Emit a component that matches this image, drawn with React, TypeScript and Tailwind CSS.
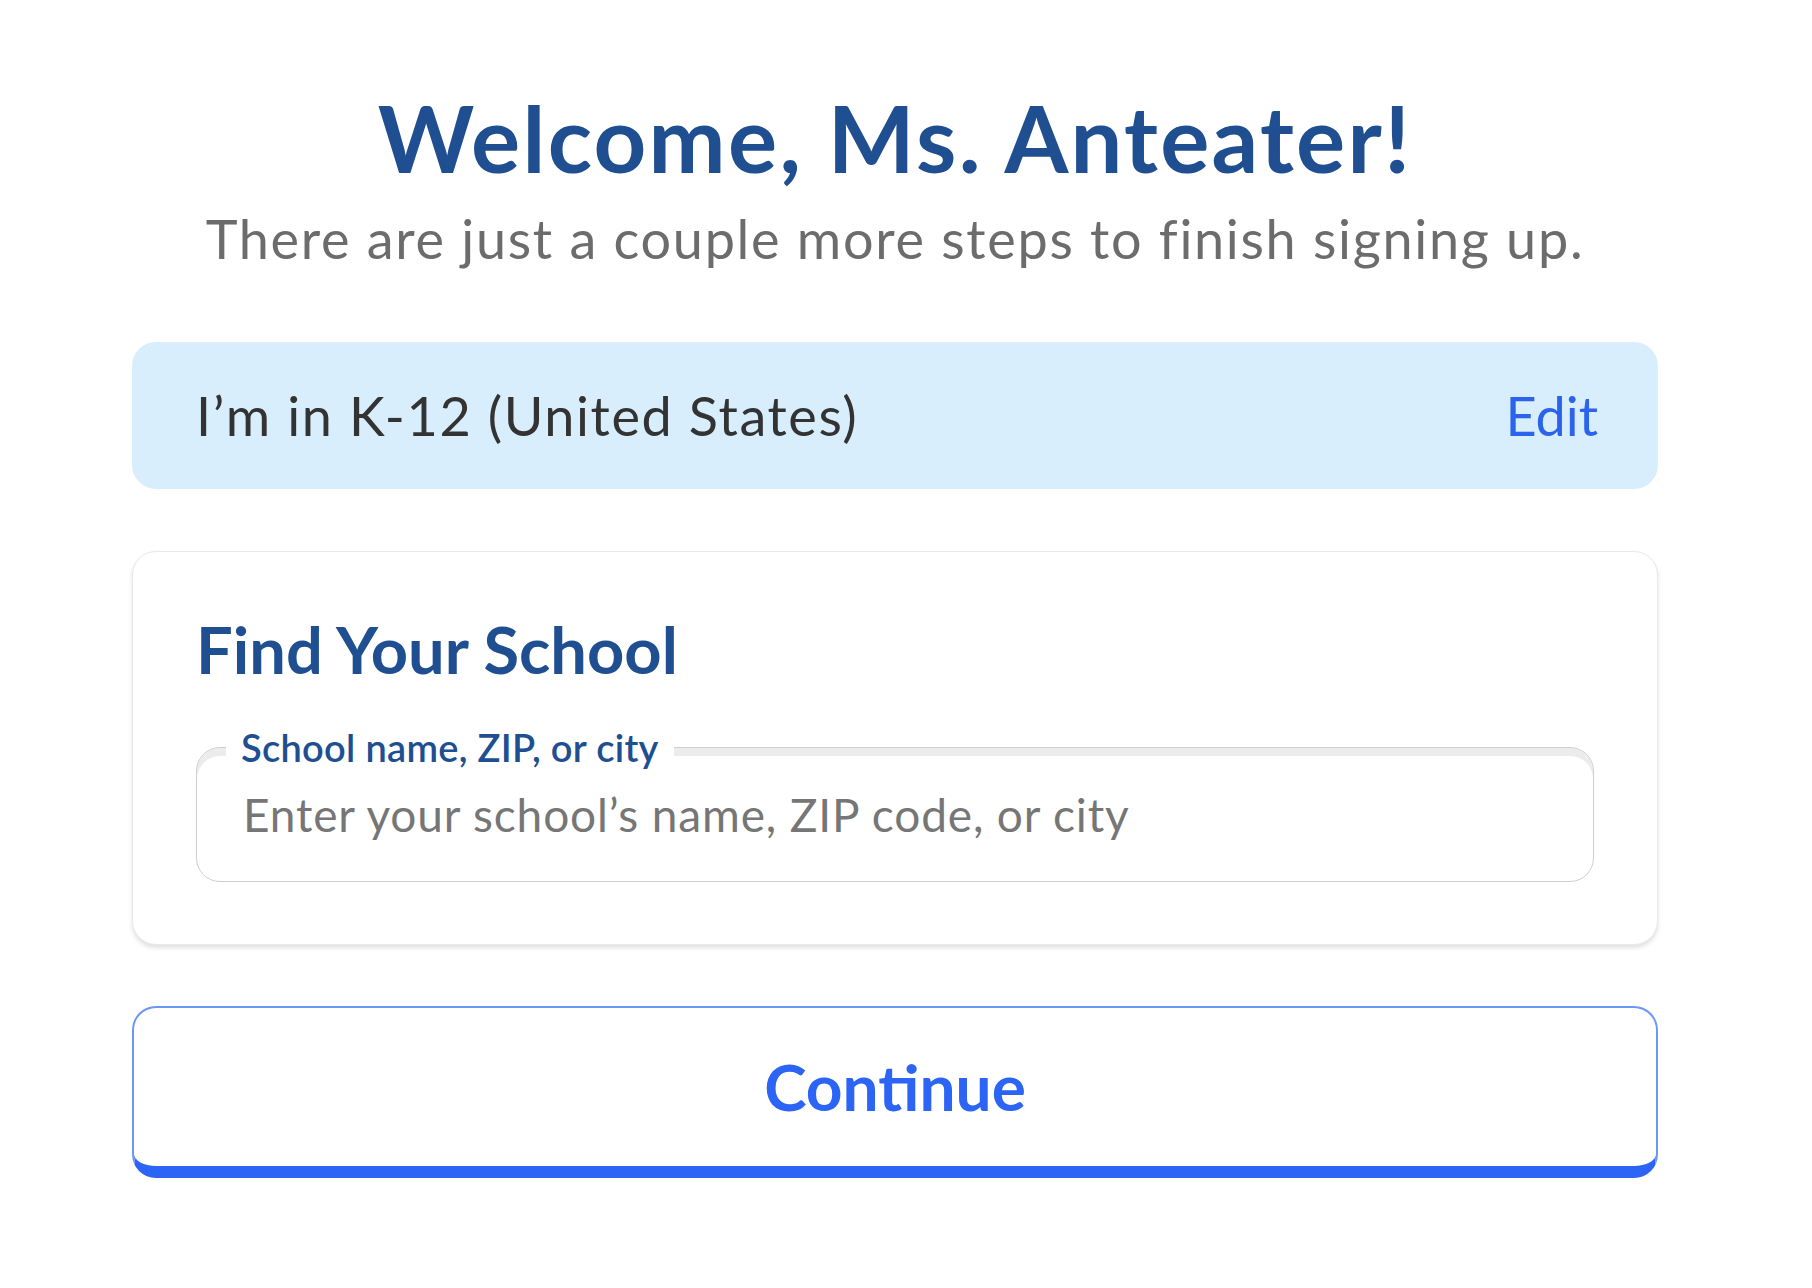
import React from 'react';

const font = { fontFamily: 'Lato, "Noto Sans", "Liberation Sans", sans-serif' };

const Banner = () => (
  <div className="flex items-center justify-between h-[147px] rounded-[24px] bg-[#d9eefc] pl-[64px] pr-[60px]">
    <span className="text-[54px] leading-none tracking-[1.6px] text-[#333333]">I’m in K-12 (United States)</span>
    <button className="text-[54px] leading-none text-[#2b63ed]">Edit</button>
  </div>
);

const SchoolCard = () => (
  <div className="mt-[62px] rounded-[24px] border border-[#e9e9e9] bg-white px-[63px] pt-[65px] pb-[62px] shadow-[0_3px_4px_rgba(0,0,0,0.12)]">
    <h2 className="text-[65px] leading-none font-bold text-[#204f91]">Find Your School</h2>

    <fieldset className="mt-[45px] rounded-[24px] border border-[#cfcfcf] p-0 shadow-[inset_0_8px_0_#ececec]">
      <legend className="ml-[29px] bg-white px-[15px] text-[38px] leading-[40px] font-semibold tracking-[0.3px] text-[#204f91]">
        School name, ZIP, or city
      </legend>
      <input
        type="text"
        placeholder="Enter your school’s name, ZIP code, or city"
        className="-mt-[20px] block h-[134px] w-full bg-transparent px-[46px] text-[46px] tracking-[0.85px] text-[#333333] outline-none placeholder:text-[#767676]"
      />
    </fieldset>
  </div>
);

export default function App() {
  return (
    <div className="min-h-screen bg-white" style={font}>
      <div className="ml-[132px] w-[1526px] pt-[92px]">
        <h1 className="text-center text-[92px] leading-none font-bold tracking-[2.3px] text-[#204f91]">
          Welcome, Ms. Anteater!
        </h1>
        <p className="mt-[28px] text-center text-[54px] leading-none tracking-[1.7px] text-[#6c6c6c]">
          There are just a couple more steps to finish signing up.
        </p>

        <div className="mt-[76px]">
          <Banner />
        </div>

        <SchoolCard />

        <button className="mt-[61px] flex h-[172px] w-full items-center justify-center rounded-[24px] border-2 border-b-[12px] border-[#6b97f7] border-b-[#2c64f5] bg-white text-[64px] font-bold text-[#2c64f5]">
          Continue
        </button>
      </div>
    </div>
  );
}
